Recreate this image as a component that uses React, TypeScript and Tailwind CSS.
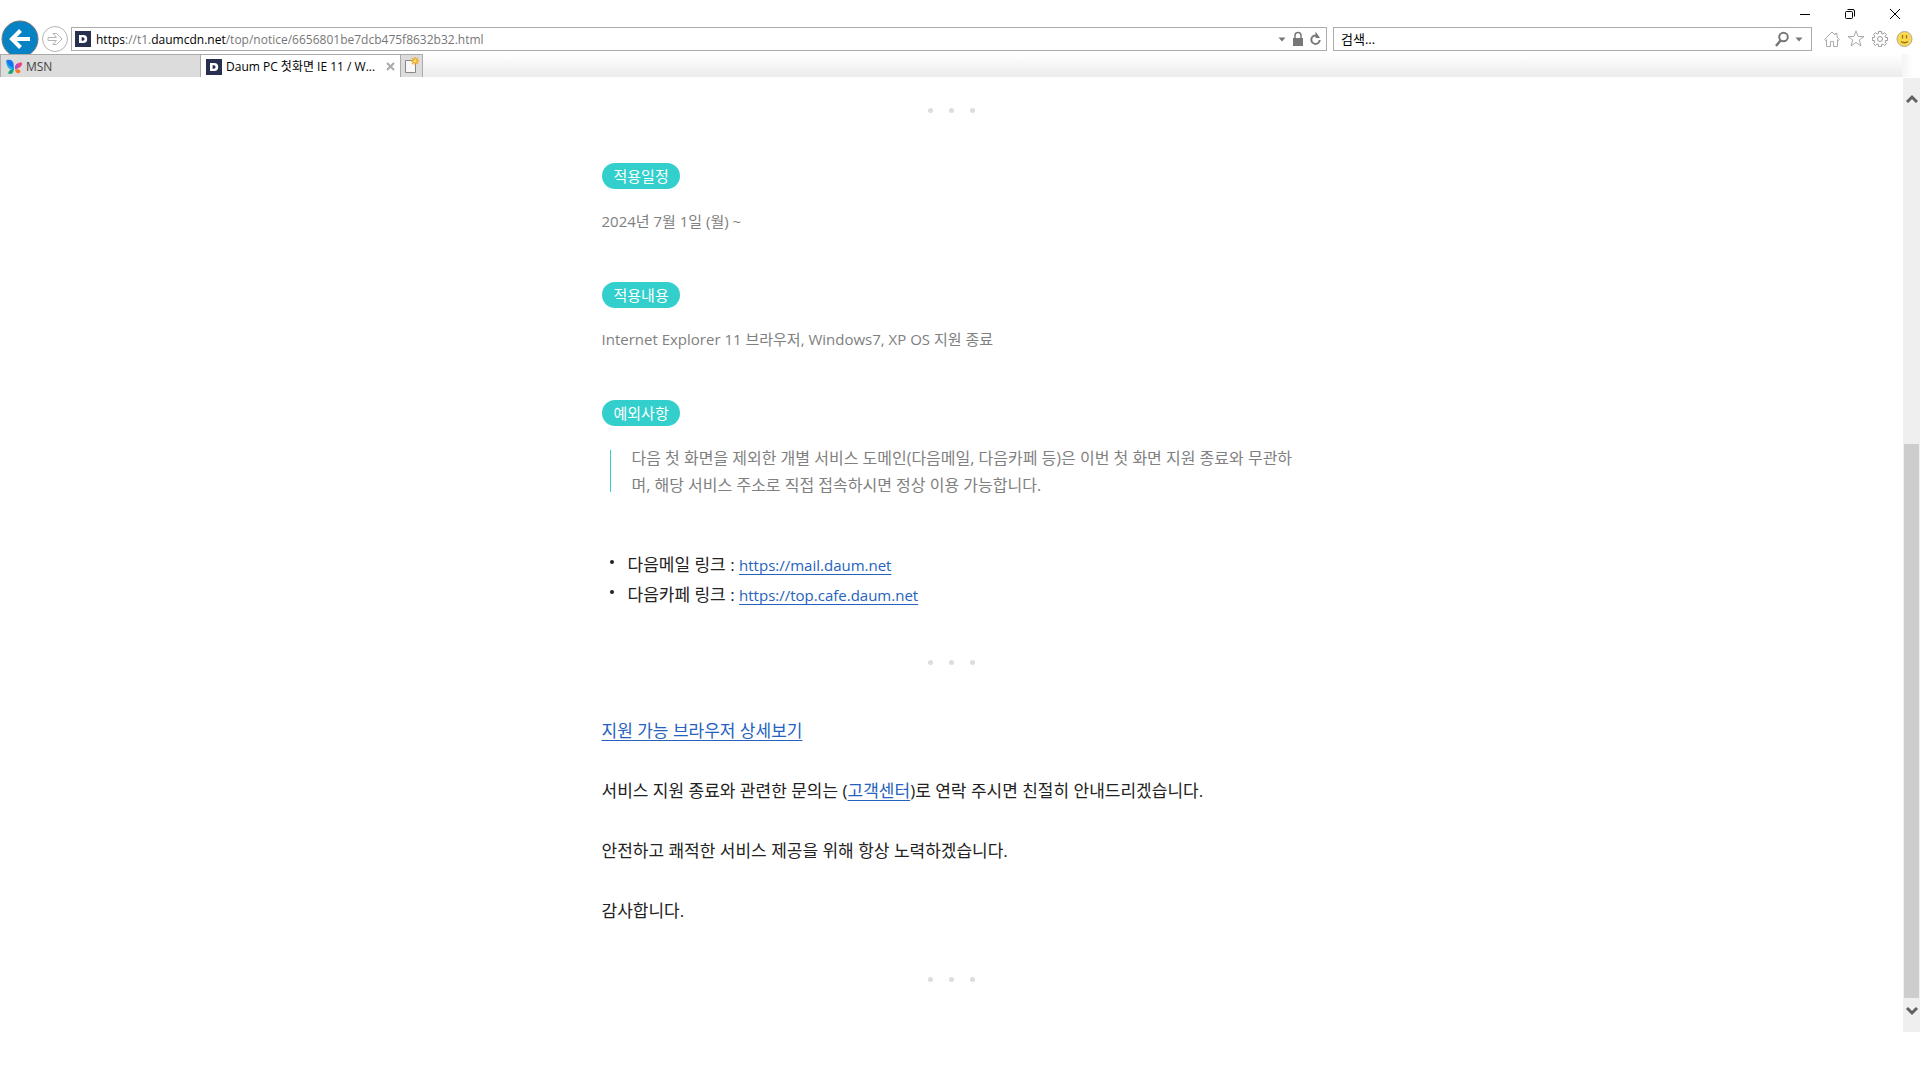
import type { ReactNode } from "react";

const Dots = () => (
  <div className="flex justify-center gap-4 py-[17px]" role="separator">
    <span className="size-[5px] rounded-full bg-[#ddd]"></span>
    <span className="size-[5px] rounded-full bg-[#ddd]"></span>
    <span className="size-[5px] rounded-full bg-[#ddd]"></span>
  </div>
);

const Pill = ({ children }: { children: ReactNode }) => (
  <h2 className="flex h-[26px] w-fit items-center rounded-full bg-[#33cfcc] pr-[11px] pl-3 text-[15px] leading-none text-white">
    {children}
  </h2>
);

const TextLink = ({ href, children }: { href: string; children: ReactNode }) => (
  <a
    href={href}
    className="text-[#2462bd] underline decoration-1 underline-offset-[3px] [text-decoration-skip-ink:none]"
  >
    {children}
  </a>
);

const Caret = () => (
  <svg width="8" height="5" viewBox="0 0 8 5" fill="#777">
    <path d="M0.5 0.5h7L4 4.5z" />
  </svg>
);

const DaumIcon = () => (
  <svg className="shrink-0" width="16" height="16" viewBox="0 0 16 16">
    <rect width="16" height="16" fill="#27304f" />
    <path d="M4 4h4.2a4 4 0 0 1 0 8H4zM6.6 6.2v3.6h1.2a1.8 1.8 0 0 0 0-3.6z" fill="#fff" fillRule="evenodd" />
  </svg>
);

const MsnIcon = () => (
  <svg className="shrink-0" width="16" height="16" viewBox="0 0 16 16">
    <path d="M0.500 1.200C4 0 7 1.500 7.500 4.500L8 11C3.500 11 0 7.500 0.500 1.200z" fill="#1573ee" />
    <path d="M0.500 1.200C1.500 5.500 4 7.500 6.500 8.500L8 11C3.500 11 0 7.500 0.500 1.200z" fill="#12b5ea" />
    <path d="M7.700 10.500C4.500 10 2.500 11.500 2.200 14.500C5 16 7.500 14.500 7.700 10.500z" fill="#17a673" />
    <path d="M9 10C9 6 11.500 3.300 15.800 3.500C16.500 7.500 13.500 9.500 9 10z" fill="#ee3d84" />
    <path d="M9 10C8.800 7.500 9.500 5.500 11.500 4.300L11.500 9.500z" fill="#9d4fd8" />
    <path d="M9 10.500C11.500 10 14 10.500 14.500 12C14 15.200 9.800 15.500 9 10.500z" fill="#f9772c" />
  </svg>
);

const TitleBar = () => (
  <div className="flex h-[27px] items-center justify-end gap-[29px] pt-px pr-[17px]">
    <button aria-label="최소화" className="flex w-4 justify-center">
      <svg width="16" height="16" viewBox="0 0 16 16" stroke="#000" fill="none">
        <path d="M3 8.500h10" />
      </svg>
    </button>
    <button aria-label="이전 크기로 복원" className="flex w-4 justify-center">
      <svg width="16" height="16" viewBox="0 0 16 16" stroke="#000" fill="none">
        <rect x="3.500" y="5.500" width="7" height="7" rx="1" />
        <path d="M5.500 3.500h5.500a1.500 1.500 0 0 1 1.500 1.500v5.500" />
      </svg>
    </button>
    <button aria-label="닫기" className="flex w-4 justify-center">
      <svg width="16" height="16" viewBox="0 0 16 16" stroke="#000" fill="none">
        <path d="M3 3l10 10M13 3L3 13" />
      </svg>
    </button>
  </div>
);

const NavBar = () => (
  <div className="flex h-[27px] items-start pr-[7px]">
    <div className="relative -mt-[7px] flex h-[34px] w-[71px] shrink-0 items-start overflow-hidden">
      <button aria-label="뒤로">
        <svg width="40" height="40" viewBox="0 0 40 40">
          <circle cx="20" cy="19" r="18" fill="#0583c5" stroke="#777" />
          <path d="M30 19H13M20.500 10.500L12 19l8.500 8.500" fill="none" stroke="#fff" strokeWidth="4" />
        </svg>
      </button>
      <button aria-label="앞으로" className="mt-[5px]">
        <svg width="30" height="28" viewBox="0 0 30 28" fill="#fff" stroke="#b4b4b4">
          <circle cx="15" cy="14" r="12.500" />
          <path d="M8 12.500h8.500l-3.500-4h3.500l5.500 5.500-5.500 5.500H13l3.500-4H8z" />
        </svg>
      </button>
    </div>
    <div className="flex h-6 flex-1 items-center border border-[#ababab] pr-[5px] pl-[3px]">
      <DaumIcon />
      <div className="flex-1 pt-px pl-[5px] text-[12px] leading-5 text-[#777]">
        <span className="text-black">https</span>://t1.<span className="text-black">daumcdn.net</span>
        /top/notice/6656801be7dcb475f8632b32.html
      </div>
      <div className="flex items-center gap-[7px]">
        <button aria-label="주소 목록">
          <Caret />
        </button>
        <button aria-label="보안 정보">
          <svg width="10" height="16" viewBox="0 0 10 16">
            <rect y="7" width="10" height="8" fill="#777" />
            <path d="M2 8V4.500a3 3 0 0 1 6 0V8" fill="none" stroke="#777" strokeWidth="1.500" />
          </svg>
        </button>
        <button aria-label="새로 고침">
          <svg width="11" height="16" viewBox="0 0 11 16">
            <path d="M6.500 4.500H5.200a4.200 4.200 0 1 0 4.500 4.500" fill="none" stroke="#777" strokeWidth="2" />
            <path d="M5.500 0.500v6.500h4.500z" fill="#777" />
          </svg>
        </button>
      </div>
    </div>
    <div className="ml-1.5 flex h-6 w-[479px] items-center border border-[#ababab] pr-2 pl-[7px]">
      <input
        type="text"
        aria-label="검색"
        placeholder="검색..."
        className="min-w-0 flex-1 text-[13px] leading-5 outline-none placeholder:text-black"
      />
      <button aria-label="검색 실행" className="mr-[6px]">
        <svg width="14" height="16" viewBox="0 0 14 16" fill="none" stroke="#777">
          <circle cx="8.500" cy="6" r="4.300" strokeWidth="2" />
          <path d="M5.500 9.500L1 15" strokeWidth="2.500" />
        </svg>
      </button>
      <button aria-label="검색 공급자">
        <Caret />
      </button>
    </div>
    <div className="mt-[3px] ml-3 flex gap-2">
      <button aria-label="홈">
        <svg width="16" height="16" viewBox="0 0 16 16" fill="#fff" stroke="#aaa">
          <path d="M0.500 8.500L8 1l3 3V2.500h2V6l2.500 2.500-1 1-1-1v7h-4v-5h-3v5h-4v-7l-1 1z" />
        </svg>
      </button>
      <button aria-label="즐겨찾기" className="-mx-px">
        <svg width="18" height="17" viewBox="0 0 18 17" fill="#fff" stroke="#aaa">
          <path d="M9 0.800l2 5.700h6l-4.800 3.600L14 16l-5-3.600L4 16l1.800-5.900L1 6.500h6z" />
        </svg>
      </button>
      <button aria-label="도구">
        <svg width="16" height="16" viewBox="0 0 16 16" fill="#fff" stroke="#999">
          <path d="M6.500 0.500h3v2l1.500 0.600 1.500-1.400 2 2-1.500 1.500 0.600 1.300h2v3h-2l-0.600 1.500 1.400 1.500-2 2-1.400-1.400-1.500 0.600v2h-3v-2L5 13.100l-1.500 1.400-2-2L2.900 11l-0.600-1.500h-2v-3h2L2.900 5 1.500 3.700l2-2L5 3.100l1.500-0.600z" />
          <circle cx="8" cy="8" r="2.500" />
        </svg>
      </button>
      <button aria-label="의견 보내기">
        <svg width="17" height="16" viewBox="0 0 17 16">
          <circle cx="8.500" cy="8" r="7.500" fill="#fdd84a" stroke="#aaa" />
          <path d="M6.500 4v3.500M10.500 4v3.500M5 10.500q3.500 2.500 7 0" fill="none" stroke="#8a7420" strokeWidth="1.300" />
        </svg>
      </button>
    </div>
  </div>
);

const TabBar = () => (
  <div className="flex h-[23px] pr-1.5 text-[12px] leading-[22px]">
    <button className="flex w-[200px] items-center gap-1 border-t border-l border-[#ababab] bg-[#dcdcdc] pt-px pl-[5px] text-[#444]">
      <MsnIcon />
      MSN
    </button>
    <div className="flex w-[200px] items-center border-t border-l border-[#ababab] bg-white pt-px pl-[5px]">
      <DaumIcon />
      <span className="flex-1 pl-1 whitespace-nowrap">Daum PC 첫화면 IE 11 / W...</span>
      <button aria-label="탭 닫기" className="px-[5px]">
        <svg width="9" height="9" viewBox="0 0 9 9" stroke="#aaa" strokeWidth="2">
          <path d="M1 1l7 7M8 1L1 8" />
        </svg>
      </button>
    </div>
    <button aria-label="새 탭" className="flex w-[23px] justify-center border border-b-0 border-[#ababab] bg-[#dcdcdc] pt-[2px]">
      <svg width="16" height="18" viewBox="0 0 16 18">
        <path d="M1.500 3.500h10v12h-10z" fill="#f8f8f8" stroke="#888" />
        <path d="M11 0v8M7 4h8M8 1l6 6M14 1L8 7" stroke="#f2a61d" strokeWidth="1.300" />
        <circle cx="11" cy="4" r="1.500" fill="#ffe08a" />
      </svg>
    </button>
    <div className="flex-1 bg-linear-to-b from-white to-[#ececec]"></div>
    <div className="w-3 bg-linear-to-r from-[#f4f4f4] to-white"></div>
  </div>
);

const ScrollBar = () => (
  <div className="mt-px flex w-[17px] shrink-0 flex-col items-center bg-[#efefef]" role="presentation">
    <button aria-label="위로 스크롤" className="pt-4 pb-[2px]">
      <svg width="12" height="10" viewBox="0 0 12 10" fill="none" stroke="#606060" strokeWidth="3">
        <path d="M1 8l5-5 5 5" />
      </svg>
    </button>
    <div className="flex-[338]"></div>
    <div className="w-[15px] flex-[553] bg-[#cdcdcd]"></div>
    <button aria-label="아래로 스크롤" className="pt-2 pb-4">
      <svg width="12" height="10" viewBox="0 0 12 10" fill="none" stroke="#606060" strokeWidth="3">
        <path d="M1 2l5 5 5-5" />
      </svg>
    </button>
  </div>
);

const Notice = () => (
  <main className="mx-auto w-full max-w-[700px] pt-[14px] pb-[33px] text-[17px] leading-[30px] text-[#222]">
    <Dots />

    <section className="pt-[33px] text-[16px] leading-[27px] text-[#808080]">
      <Pill>적용일정</Pill>
      <p className="mt-[19px] mb-[47px] text-[15px] leading-[27px]">2024년 7월 1일 (월) ~</p>
      <Pill>적용내용</Pill>
      <p className="mt-[18px] mb-[47px] text-[15px] leading-[27px]">
        Internet Explorer 11 브라우저, Windows7, XP OS 지원 종료
      </p>
      <Pill>예외사항</Pill>
      <blockquote className="mt-[19px] flex pl-2">
        <span className="mt-[5px] mb-[7px] w-px shrink-0 bg-[#33cfcc]"></span>
        <p className="pl-[21px] break-all">
          다음 첫 화면을 제외한 개별 서비스 도메인(다음메일, 다음카페 등)은 이번 첫 화면 지원 종료와 무관하며, 해당 서비스
          주소로 직접 접속하시면 정상 이용 가능합니다.
        </p>
      </blockquote>
    </section>

    <ul className="mt-[51px] mb-[33px] pl-2">
      <li className="flex">
        <span className="mt-[10px] mr-[14px] size-1 rounded-full bg-[#222]"></span>
        <span>
          다음메일 링크 :{" "}
          <span className="text-[15px]">
            <TextLink href="https://mail.daum.net">https://mail.daum.net</TextLink>
          </span>
        </span>
      </li>
      <li className="flex">
        <span className="mt-[10px] mr-[14px] size-1 rounded-full bg-[#222]"></span>
        <span>
          다음카페 링크 :{" "}
          <span className="text-[15px]">
            <TextLink href="https://top.cafe.daum.net">https://top.cafe.daum.net</TextLink>
          </span>
        </span>
      </li>
    </ul>

    <Dots />

    <div className="mt-[34px] mb-[34px] flex flex-col gap-[30px]">
      <p>
        <TextLink href="#browsers">지원 가능 브라우저 상세보기</TextLink>
      </p>
      <p>
        서비스 지원 종료와 관련한 문의는 (<TextLink href="#help">고객센터</TextLink>)로 연락 주시면 친절히 안내드리겠습니다.
      </p>
      <p>안전하고 쾌적한 서비스 제공을 위해 항상 노력하겠습니다.</p>
      <p>감사합니다.</p>
    </div>

    <Dots />
  </main>
);

const App = () => {
  return (
    <div className="min-h-screen bg-white font-['Open_Sans','Noto_Sans_CJK_KR',sans-serif]">
      <header>
        <TitleBar />
        <NavBar />
        <TabBar />
      </header>
      <div className="flex">
        <Notice />
        <ScrollBar />
      </div>
    </div>
  );
};

export default App;
